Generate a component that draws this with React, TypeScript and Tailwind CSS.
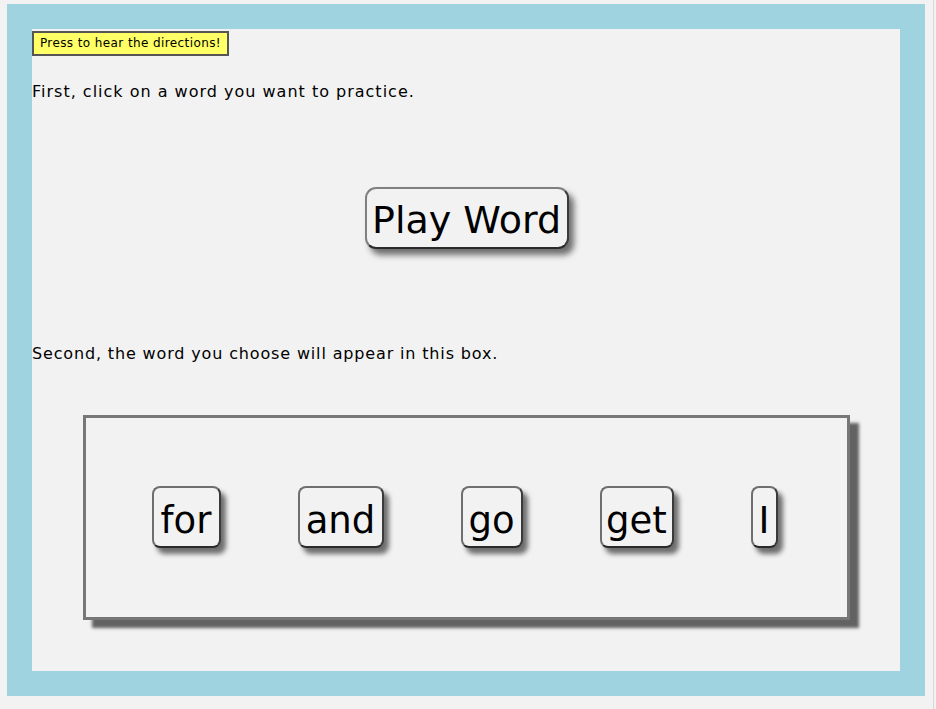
import React from "react"

const words = [
  { text: "for", w: "w-[69px]" },
  { text: "and", w: "w-[86px]" },
  { text: "go", w: "w-[62px]" },
  { text: "get", w: "w-[74px]" },
  { text: "I", w: "w-[27px]" },
]

export default function App() {
  const font = { fontFamily: '"DejaVu Sans", "Noto Sans", sans-serif' }

  return (
    <div className="w-[936px] h-[709px] bg-[#f2f2f2] overflow-hidden" style={font}>
      <div className="w-[934px] h-[709px] border-r border-[#d9d9d9] pt-[4px] pl-[7px]">
        <div className="w-[918px] h-[692px] bg-[#9fd3e0] p-[25px]">
          <div className="w-[868px] h-[642px] bg-[#f2f2f2] pt-px text-black">
            {/* directions button */}
            <button className="h-[25px] w-[197px] bg-[#ffff66] border-2 border-[#555] text-[12px] tracking-[0.4px] leading-none text-black">
              Press to hear the directions!
            </button>

            <p className="mt-[26px] text-[16px] tracking-[1px] leading-5">
              First, click on a word you want to practice.
            </p>

            <div className="flex justify-center mt-[85px] pl-[1px]">
              <button className="w-[204px] h-[62px] rounded-[11px] border-2 border-[#808080] border-b-[#2a2a2a] border-r-[#3a3a3a] bg-[#f2f2f2] text-[38px] leading-none pt-[4px] shadow-[5px_6px_6px_rgba(0,0,0,0.55)]">
                Play Word
              </button>
            </div>

            <p className="mt-[95px] text-[16px] tracking-[0.85px] leading-5">
              Second, the word you choose will appear in this box.
            </p>

            {/* word box */}
            <div className="ml-[51px] mt-[51px] w-[767px] h-[205px] border-[3px] border-[#777] shadow-[9px_8px_3px_rgba(90,90,90,0.95)] flex items-center justify-center gap-[77px] pr-[4px]">
              {words.map((w) => (
                <button
                  key={w.text}
                  className={`${w.w} h-[62px] rounded-[8px] border-2 border-[#6f6f6f] border-b-[#2a2a2a] border-r-[#3a3a3a] bg-[#f2f2f2] text-[37px] leading-none pt-[6px] shadow-[5px_6px_5px_rgba(0,0,0,0.55)] flex items-center justify-center`}
                >
                  {w.text}
                </button>
              ))}
            </div>
          </div>
        </div>
      </div>
    </div>
  )
}
